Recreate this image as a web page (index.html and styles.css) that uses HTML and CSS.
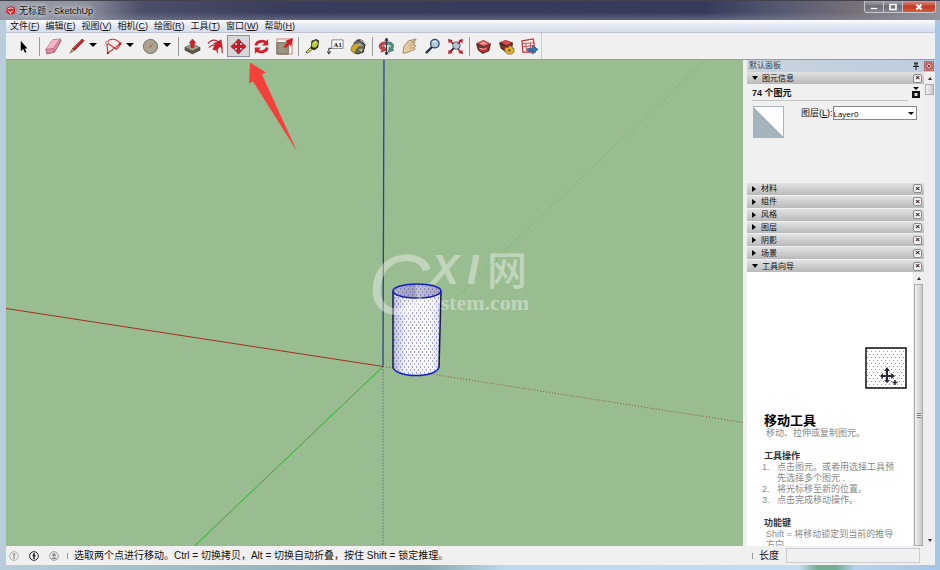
FILE: index.html
```html
<!DOCTYPE html>
<html lang="zh-CN">
<head>
    <meta charset="UTF-8">
    <meta name="viewport" content="width=device-width, initial-scale=1.0">
    <title>无标题 - SketchUp</title>
    <link rel="stylesheet" href="styles.css">
</head>
<body>

    <header class="titlebar">
        <svg class="app-icon" viewBox="0 0 10 10"><path d="M1 2 6 0 10 2V8L5 10 0 7Z" fill="#d8202a"/><path d="M2 3.5 5.5 2 8 3M2 5.5 5 7 8 5.5M5 7V9" stroke="#fff" fill="none"/></svg>
        <h1 class="title">无标题 - SketchUp</h1>
        <div class="window-buttons">
            <button class="win-btn" aria-label="最小化"><svg viewBox="0 0 10 8"><path d="M1.5 4.500h7v2h-7z" fill="#fff" stroke="#555" stroke-width=".5"/></svg></button>
            <button class="win-btn" aria-label="最大化"><svg viewBox="0 0 10 8"><path d="M2 1.500h6v5H2z" fill="none" stroke="#fff" stroke-width="1.600"/></svg></button>
            <button class="win-btn win-close" aria-label="关闭"><svg viewBox="0 0 10 8"><path d="M2.500 1.500 7.500 6.500M7.500 1.500 2.500 6.500" stroke="#fff" stroke-width="2"/></svg></button>
        </div>
    </header>

    <div class="window">
        <nav class="menubar">
            <button>文件(<u>F</u>)</button>
            <button>编辑(<u>E</u>)</button>
            <button>视图(<u>V</u>)</button>
            <button>相机(<u>C</u>)</button>
            <button>绘图(<u>R</u>)</button>
            <button>工具(<u>T</u>)</button>
            <button>窗口(<u>W</u>)</button>
            <button>帮助(<u>H</u>)</button>
        </nav>

        <div class="toolbar">
            <div class="tools">
                <button class="tool" aria-label="选择"><svg viewBox="0 0 18 18"><path d="M4 3v11l2.500-2.300 2 4 1.600-.8-2-3.900H11Z" fill="#000"/></svg></button>
                <span class="sep"></span>
                <button class="tool" aria-label="擦除"><svg viewBox="0 0 18 18"><path d="M8 2 16 1 17 3 10 15 2 17 1 12Z" fill="#e28ba2" stroke="#8d4257" stroke-width=".8"/><path d="M8 2 16 1 9 11 1 12Z" fill="#f3b6c5"/><path d="M1 12 9 11 16 1M9 11l1 4" fill="none" stroke="#a85a70" stroke-width=".7"/></svg></button>
                <button class="tool" aria-label="直线"><svg viewBox="0 0 18 18"><path d="M15 1 17 3 7 13 4 14 5 11Z" fill="#c81e24" stroke="#771418" stroke-width=".7"/><path d="M5 11 7 13 2 16Z" fill="#d7b47b" stroke="#4d3c20" stroke-width=".6"/><path d="M14 2 6 11" stroke="#f06b66" stroke-width=".7"/></svg></button>
                <button class="drop" aria-label="直线选项"></button>
                <button class="tool" aria-label="圆弧"><svg viewBox="0 0 18 18"><path d="M2 5 3 16 16 6M2 5C5-1 13 1 16 6M2 5 12 12C15 9 16 8 16 6" fill="none" stroke="#d42a31" stroke-width="1.200"/><circle cx="2" cy="5" r="1.500" fill="#eee" stroke="#a33" stroke-width=".6"/><circle cx="3" cy="16" r="1.300" fill="#c22"/><circle cx="16" cy="6" r="1.500" fill="#c22"/></svg></button>
                <button class="drop" aria-label="圆弧选项"></button>
                <button class="tool" aria-label="圆"><svg viewBox="0 0 18 18"><circle cx="9" cy="9" r="7.500" fill="#a9a38f" stroke="#746f60"/><circle cx="9" cy="9" r="1" fill="#d13a32"/><path d="m9 9 5-5" stroke="#7f7866" stroke-width=".7"/></svg></button>
                <button class="drop" aria-label="圆选项"></button>
                <span class="sep"></span>
                <button class="tool" aria-label="推/拉"><svg viewBox="0 0 18 18"><path d="M1 10 9 6 17 10 9 14Z" fill="#a19f85" stroke="#484638" stroke-width=".6"/><path d="M1 10v3l8 4 8-4v-3l-8 4Z" fill="#59564a" stroke="#39372f" stroke-width=".5"/><path d="m9 1 3.500 4.500h-2V10h-3V5.500h-2Z" fill="#d9202a" stroke="#84151b" stroke-width=".6"/></svg></button>
                <button class="tool" aria-label="偏移"><svg viewBox="0 0 18 18"><path d="M1 6C6-1 17 2 16 16M2 10c5-5 9-2 9 6" fill="none" stroke="#cc2731" stroke-width="1.300"/><path d="m6 12 3-5-2-1 8-4 1 9-2-2-4 4Z" fill="#d51c27" stroke="#811b20" stroke-width=".6"/></svg></button>
                <button class="tool tool-active" aria-label="移动" aria-pressed="true"><svg viewBox="0 0 18 18"><path d="m9 1 3.500 4H10v3h3V5.500L17 9l-4 3.500V10h-3v3h2.500L9 17l-3.500-4H8v-3H5v2.500L1 9l4-3.500V8h3V5H5.500Z" fill="#d41c28" stroke="#a3151f" stroke-width="1"/></svg></button>
                <button class="tool" aria-label="旋转"><svg viewBox="0 0 18 18"><path d="M3 8C4 3 11 2 14 5M15 10C14 15 7 16 4 13" fill="none" stroke="#d21f2a" stroke-width="3"/><path d="M16 1v7H9.500ZM2 17v-7h6.500Z" fill="#d21f2a"/></svg></button>
                <button class="tool" aria-label="缩放"><svg viewBox="0 0 18 18"><path d="M1 1h16v16H1z" fill="#f4efe9" stroke="#d07a72"/><path d="M1 5h12v12H1z" fill="#9b9681" stroke="#69665a"/><path d="m8 9 4-4-2-2 8-3-2 9-2-2-4 4Z" fill="#da1c28"/></svg></button>
                <span class="sep"></span>
                <button class="tool" aria-label="卷尺"><svg viewBox="0 0 18 18"><path d="m2 15 5-5 2 2-5 4Z" fill="#e5dc36" stroke="#333" stroke-width=".8"/><path d="M8 3 13 1l3 2-1 7-4 3-4-2Z" fill="#292a20"/><ellipse cx="11.500" cy="6.500" rx="3" ry="4" transform="rotate(25 11.500 6.500)" fill="#b9c83d"/><path d="m10 7 3-3" stroke="#eee"/></svg></button>
                <button class="tool" aria-label="文字"><svg viewBox="0 0 18 18"><path d="M5 2h12v9H5z" fill="#fff" stroke="#666" stroke-width=".8"/><path d="M5 11H2v5m-2-2 2 3 2-3" fill="none" stroke="#222"/><text class="icon-text" x="7" y="9">A1</text></svg></button>
                <button class="tool" aria-label="材质"><svg viewBox="0 0 18 18"><path d="M3 8 9 2l7 5-2 8-6 2-6-3Z" fill="#62665b" stroke="#292a25"/><path d="M4 6C6 1 12 0 15 5" fill="none" stroke="#444"/><path d="M1 13C1 7 6 5 9 6l4 3c-4-1-7 2-8 8Z" fill="#d0a830" stroke="#6b551f" stroke-width=".6"/><path d="m10 5 4 3-2 1-4-3Z" fill="#85aeb2"/><path d="m9 12 5-1-2 4Z" fill="#b6b59d"/></svg></button>
                <span class="sep"></span>
                <button class="tool" aria-label="环绕观察"><svg viewBox="0 0 18 18"><path d="M8 4C2 4 0 8 2 11l2 2-1 2 6-2-3-5-1 2C3 8 5 7 8 7Z" fill="#c84347" stroke="#712c2e" stroke-width=".6"/><path d="M10 4c7 0 8 5 5 8l2 1-6 2 1-6 1 2c2-2 1-4-3-4Z" fill="#499a74" stroke="#285e45" stroke-width=".6"/><path d="M9 0v18M7.500 3 9 0l1.500 3M7.500 15 9 18l1.500-3" fill="none" stroke="#334" stroke-width="1.300"/></svg></button>
                <button class="tool" aria-label="平移"><svg viewBox="0 0 18 18"><path d="M2 16 3 9 8 3l8-2-1 2-3 1 3 1-2 2 3 1-2 2 1 2-5 2-5 2Z" fill="#e6c99f" stroke="#8e7350" stroke-width=".8"/><path d="m8 8 4-4M9 9l4-2M9 11l5-1" stroke="#a98b63" stroke-width=".6"/></svg></button>
                <button class="tool" aria-label="缩放视图"><svg viewBox="0 0 18 18"><path d="m9 9-7 7" stroke="#29313d" stroke-width="2.500"/><circle cx="11.500" cy="6" r="4.500" fill="#aacbdc" stroke="#344b67" stroke-width="1.400"/><path d="M9 5q2-2 4-1" fill="none" stroke="#fff"/></svg></button>
                <button class="tool" aria-label="充满视窗"><svg viewBox="0 0 18 18"><path d="m8 10-5 5" stroke="#222" stroke-width="2"/><circle cx="10" cy="8" r="4" fill="#abcbd7" stroke="#3f596d"/><path d="m1 1 5 1-1 1 2 3-1 1-3-3-1 2ZM17 1l-5 1 1 1-2 3 1 1 3-3 1 2ZM17 17l-5-1 1-1-2-3 1-1 3 3 1-2ZM1 17l5-1-1-1 1-2-1-1-2 2-1-2Z" fill="#c91c2c"/></svg></button>
                <span class="sep"></span>
                <button class="tool" aria-label="3D Warehouse"><svg viewBox="0 0 18 18"><path d="m1 6 8-4 8 4-2 8-7 3-5-4Z" fill="#593834"/><path d="m2 5 7-3 7 4-7 3Z" fill="#dc5454"/><path d="m3 9 5 2 7-3-2 6-6 1-3-3Z" fill="#cb292e"/><path d="m5 6 4-2 4 2-4 1Z" fill="#f6a4a1"/><path d="m5 11 4 1 3-1" fill="none" stroke="#f5c0b8"/></svg></button>
                <button class="tool" aria-label="扩展程序库"><svg viewBox="0 0 18 18"><path d="m1 5 7-3 8 3-1 6-7 4-5-4Z" fill="#54302b"/><path d="m3 4 5-2 6 3-5 3Z" fill="#e3484b"/><path d="m3 8 5 2 5-3-1 5-4 1Z" fill="#c7232b"/><path d="M8 10h3l1-2 3 1v2h2v4l-2 2h-5l-3-4Z" fill="#e3b52c" stroke="#7c5b13" stroke-width=".7"/><circle cx="12" cy="13" r="1.300" fill="#6f5525"/></svg></button>
                <button class="tool" aria-label="发送到 LayOut"><svg viewBox="0 0 18 18"><path d="m1 3 12-2 2 14H2Z" fill="#fff1ef" stroke="#cf2e35" stroke-width="1.300"/><path d="m1 6 13-1M2 9l12-1M5 6l1 8M10 5v9" stroke="#d9484c"/><path d="M7 11h5V8l6 4-6 5v-3H7Z" fill="#2d79b8" stroke="#174b81" stroke-width=".7"/></svg></button>
            </div>
        </div>

        <main class="workspace">
            <svg class="canvas" viewBox="6 60 737 487" preserveAspectRatio="xMidYMid slice" role="img" aria-label="模型视图">
                <defs>
                    <pattern id="dots" width="4" height="6" patternUnits="userSpaceOnUse">
                        <path d="M0 1h1v1H0zM2 4h1v1H2z" fill="#4a4dbe"/>
                    </pattern>
                    <linearGradient id="side">
                        <stop offset="0" stop-color="#bdbdcc"/>
                        <stop offset=".25" stop-color="#f3f3fa"/>
                        <stop offset=".75" stop-color="#ffffff"/>
                        <stop offset="1" stop-color="#dadae8"/>
                    </linearGradient>
                    <linearGradient id="inside">
                        <stop offset="0" stop-color="#b2b2c2"/>
                        <stop offset=".45" stop-color="#a0a1b5"/>
                        <stop offset=".5" stop-color="#c4c4d0"/>
                        <stop offset="1" stop-color="#a5a5b9"/>
                    </linearGradient>
                </defs>
                <rect x="6" y="60" width="737" height="487" fill="#9abc91"/>
                <!-- axes -->
                <path d="M6 309 383 367" stroke="#a3301f"/>
                <path d="M383 367 194 547" stroke="#2eac2e"/>
                <path d="M384 60 383 367" stroke="#2b3f9c" stroke-width="1.300"/>
                <path d="M383 367 743 423" stroke="#92502e" stroke-dasharray="1 2"/>
                <path d="M383 367 706 60" stroke="#5ba555" stroke-dasharray="1 3"/>
                <path d="M383 367V547" stroke="#35508c" stroke-dasharray="1 2"/>
                <!-- cylinder -->
                <path d="M393 291V368C395 379 437 379 439 368L441 291Z" fill="url(#side)"/>
                <path d="M393 291V368C395 379 437 379 439 368L441 291Z" fill="url(#dots)"/>
                <path d="M393 292V368M441 292 439 368" stroke="#171742" stroke-width="1.500"/>
                <path d="M393 367C394 379 438 379 439 367" fill="none" stroke="#191ec4" stroke-width="1.600"/>
                <ellipse cx="417" cy="291.500" rx="24" ry="7" fill="url(#inside)"/>
                <ellipse cx="417" cy="291.500" rx="24" ry="7" fill="url(#dots)" stroke="#191ec4" stroke-width="1.600"/>
                <!-- watermark -->
                <g class="watermark">
                    <text class="mark-c" x="368" y="314">C</text>
                    <text class="mark-x" x="431" y="284">X</text>
                    <text class="mark-x" x="467" y="284">I</text>
                    <text class="mark-net" x="487" y="285">网</text>
                    <text class="mark-url" x="421" y="310">system.com</text>
                </g>
                <path d="m250 63 16 10-4 2 35 77-44-70-4 2Z" fill="#f5413c"/>
            </svg>

            <aside class="tray">
                <div class="tray-title">
                    <h2>默认面板</h2>
                    <button class="pin" aria-label="固定"><svg viewBox="0 0 8 8"><path d="M2 1h4M3 1v3M5 1v3M1 4.500h6M4 5v3" stroke="#111" fill="none"/></svg></button>
                    <button class="tray-close" aria-label="关闭面板"><svg viewBox="0 0 8 8"><path d="M1 1h6v6H1zM2.500 2.500l3 3m0-3-3 3" stroke="#8e2c2c" fill="none"/></svg></button>
                </div>
                <div class="tray-body">
                    <div class="panels">
                        <section class="entity">
                            <div class="panel-head"><button class="fold open">图元信息</button><button class="x-btn" aria-label="关闭图元信息">×</button></div>
                            <div class="entity-count">
                                <h3>74 个图元</h3>
                                <button class="lock" aria-label="详细信息"><svg viewBox="0 0 8 11"><path d="M1 0h6L4 3ZM0 4h8v7H0z" fill="#111"/><path d="M2.500 6h3v3h-3z" fill="#ddd"/></svg></button>
                            </div>
                            <div class="entity-info">
                                <button class="swatch" aria-label="材质"></button>
                                <label for="layer">图层(<u>L</u>):</label>
                                <div class="select-box">
                                    <select id="layer"><option>Layer0</option></select>
                                </div>
                            </div>
                        </section>
                        <div class="panel-list">
                            <div class="panel-head"><button class="fold">材料</button><button class="x-btn" aria-label="关闭材料">×</button></div>
                            <div class="panel-head"><button class="fold">组件</button><button class="x-btn" aria-label="关闭组件">×</button></div>
                            <div class="panel-head"><button class="fold">风格</button><button class="x-btn" aria-label="关闭风格">×</button></div>
                            <div class="panel-head"><button class="fold">图层</button><button class="x-btn" aria-label="关闭图层">×</button></div>
                            <div class="panel-head"><button class="fold">阴影</button><button class="x-btn" aria-label="关闭阴影">×</button></div>
                            <div class="panel-head"><button class="fold">场景</button><button class="x-btn" aria-label="关闭场景">×</button></div>
                            <div class="panel-head"><button class="fold open">工具向导</button><button class="x-btn" aria-label="关闭工具向导">×</button></div>
                        </div>
                        <section class="guide">
                            <div class="guide-text">
                                <svg class="guide-pic" viewBox="0 0 42 42">
                                    <defs><pattern id="fine" width="4" height="6" patternUnits="userSpaceOnUse"><path d="M0 1h1v1H0zM2 4h1v1H2z" fill="#999"/></pattern></defs>
                                    <rect x="1" y="1" width="40" height="40" fill="#fff"/>
                                    <rect x="1" y="1" width="40" height="40" fill="url(#fine)" stroke="#111" stroke-width="1.500"/>
                                    <path d="m22 20 3 4h-2v4h3v-2l4 3-4 3v-2h-3v3h2l-3 3-3-3h2v-3h-3v2l-3-3 3-3v2h3v-4h-2Z" fill="#29293f"/>
                                    <path d="M30 33v5M27.500 35.500h5" stroke="#29293f" stroke-width="1.500"/>
                                </svg>
                                <h3>移动工具</h3>
                                <p class="lead">移动、拉伸或复制图元。</p>
                                <h4>工具操作</h4>
                                <ol>
                                    <li>点击图元。或者用选择工具预先选择多个图元 .</li>
                                    <li>将光标移至新的位置。</li>
                                    <li>点击完成移动操作。</li>
                                </ol>
                                <h4>功能键</h4>
                                <p class="keys">Shift = 将移动锁定到当前的推导方向</p>
                            </div>
                            <div class="scroll"><span class="arrow-up"></span><span class="thumb thumb-long"></span></div>
                        </section>
                    </div>
                    <div class="scroll scroll-outer"><span class="arrow-up"></span><span class="thumb thumb-short"></span><span class="arrow-down"></span></div>
                </div>
            </aside>
        </main>

        <footer class="status">
            <button class="status-icon" aria-label="地理位置"><svg viewBox="0 0 10 10"><circle cx="5" cy="5" r="4.300" fill="none" stroke="#aaa"/><path d="M5 4v4M3.500 3h3" stroke="#999" stroke-width="1.500"/></svg></button>
            <button class="status-icon" aria-label="归属"><svg viewBox="0 0 10 10"><circle cx="5" cy="5" r="4.300" fill="#fff" stroke="#222"/><path d="M5 2v6M3.500 4.500h3" stroke="#222" stroke-width="1.500"/></svg></button>
            <button class="status-icon" aria-label="登录"><svg viewBox="0 0 10 10"><circle cx="5" cy="5" r="4.300" fill="#eee" stroke="#999"/><circle cx="5" cy="4" r="1.800" fill="#888"/><path d="M2 8q3-3.500 6 0Z" fill="#888"/></svg></button>
            <span class="status-sep"></span>
            <p class="hint">选取两个点进行移动。Ctrl = 切换拷贝，Alt = 切换自动折叠，按住 Shift = 锁定推理。</p>
            <span class="status-sep"></span>
            <label for="length">长度</label>
            <input id="length" type="text">
        </footer>
    </div>

</body>
</html>
```

FILE: styles.css
```css
* {
    box-sizing: border-box;
}

body {
    margin: 0;
    height: 100vh;
    display: flex;
    flex-direction: column;
    overflow: hidden;
    padding: 0 5px 5px 6px;
    background: linear-gradient(90deg, #b9cddd, #a5c2c8 14%, #8aa8ad 45%, #bfd9ef 54%, #c5dcf2 85%, #74ad94 87%, #74ad94 89%, #b5d2ee 91%, #a5c6e4);
    font-family: "Liberation Sans", "Noto Sans CJK SC", sans-serif;
    font-size: 9px;
    color: #111;
}

h1, h2, h3, h4, p, ol {
    margin: 0;
    padding: 0;
}

button {
    margin: 0;
    padding: 0;
    border: 0;
    background: none;
    font: inherit;
    color: inherit;
}

svg {
    display: block;
}

/* title bar */
.titlebar {
    flex: 0 0 20px;
    display: flex;
    align-items: center;
    margin: 0 -5px 0 -6px;
    padding-left: 6px;
    border-top: 1px solid #42434f;
    background:
        radial-gradient(ellipse at 122px 17px, #5480ac 0, transparent 8px),
        radial-gradient(ellipse at 203px 17px, #7e9fb0 0, transparent 8px),
        radial-gradient(ellipse at 468px 17px, #58988f 0, transparent 8px),
        radial-gradient(ellipse at 555px 17px, #7597c2 0, transparent 8px),
        radial-gradient(ellipse at 645px 17px, #7f9cc2 0, transparent 8px),
        radial-gradient(ellipse at 822px 17px, #80a5d3 0, transparent 10px),
        linear-gradient(transparent 60%, rgba(140, 145, 170, .45)),
        linear-gradient(90deg, #9a9ea9, #8e929f 9%, #4c4f68 15%, #3a3c5c 30%, #373a5b 75%, #555970 83%, #777078 91%, #939399);
}

.app-icon {
    width: 9px;
    height: 9px;
    margin-right: 4px;
}

.title {
    font-size: 9px;
    font-weight: normal;
    line-height: 12px;
    text-shadow: 0 0 4px #fff, 0 0 6px #ddd;
}

.window-buttons {
    display: flex;
    align-self: flex-start;
    margin-left: auto;
    margin-right: 4px;
    border: 1px solid #c5c6cd;
    border-top: 0;
    border-radius: 0 0 3px 3px;
    overflow: hidden;
}

.win-btn {
    width: 19px;
    height: 11px;
    display: grid;
    place-items: center;
    border-right: 1px solid #c5c6cd;
    background: linear-gradient(#a5a5ad, #6b6c78 50%, #878893);
}

.win-btn svg {
    width: 10px;
    height: 8px;
}

.win-close {
    width: 32px;
    border-right: 0;
    background: linear-gradient(#dc9487, #bf3c28 50%, #d95b38);
}

/* window content */
.window {
    flex: 1;
    min-height: 0;
    display: flex;
    flex-direction: column;
    background: #f0f0f0;
}

.menubar {
    flex: 0 0 13px;
    display: flex;
    align-items: center;
    gap: 6px;
    padding-left: 4px;
    border-bottom: 1px solid #c0c4ce;
    background: linear-gradient(#fbfcfe, #e4e8f4 50%, #d6dcee);
    line-height: 12px;
}

.menubar button {
    white-space: nowrap;
}

.toolbar {
    flex: 0 0 27px;
    display: flex;
    border-bottom: 1px solid #9a9d9a;
}

.tools {
    display: flex;
    align-items: center;
    padding-left: 8px;
    border-right: 1px solid #ccc;
}

.tool {
    width: 23px;
    height: 22px;
    display: grid;
    place-items: center;
    border: 1px solid transparent;
}

.tool svg {
    width: 17px;
    height: 17px;
}

.tool-active {
    border-color: #8b9198;
    background: #d5d7da;
}

.icon-text {
    font: bold 7px "Liberation Serif", serif;
}

.drop {
    width: 14px;
    height: 20px;
    display: grid;
    place-items: center;
}

.drop::before {
    content: "";
    margin: 0 4px 3px 0;
    border: 4px solid transparent;
    border-top-color: #000;
    border-bottom: 0;
}

.sep {
    width: 1px;
    height: 19px;
    margin: 0 2px;
    background: #999;
}

.workspace {
    flex: 1;
    min-height: 0;
    display: flex;
    gap: 4px;
}

.canvas {
    flex: 1;
    min-width: 0;
    height: 100%;
}

.watermark {
    fill: #fff;
    opacity: .38;
}

.mark-c {
    font: italic 86px "Liberation Sans", sans-serif;
}

.mark-x {
    font: italic bold 42px "Liberation Sans", sans-serif;
}

.mark-net {
    font: 500 40px "Noto Sans CJK SC", sans-serif;
}

.mark-url {
    font: bold 22px "Liberation Serif", serif;
}

/* default tray */
.tray {
    flex: 0 0 188px;
    display: flex;
    flex-direction: column;
    min-height: 0;
}

.tray-title {
    flex: 0 0 12px;
    display: flex;
    align-items: center;
    gap: 4px;
    padding: 0 1px 0 2px;
    background: linear-gradient(90deg, #c8d3dd, #bccddf);
}

.tray-title h2 {
    flex: 1;
    font-size: 8px;
    font-weight: normal;
    line-height: 12px;
    color: #3b4754;
}

.pin svg {
    width: 8px;
    height: 8px;
}

.tray-close {
    border: 1px solid #b96a6a;
    background: #e5b9b5;
}

.tray-close svg {
    width: 8px;
    height: 8px;
}

.tray-body {
    flex: 1;
    min-height: 0;
    display: flex;
}

.panels {
    flex: 1;
    min-width: 0;
    display: flex;
    flex-direction: column;
}

.panel-head {
    display: flex;
    align-items: center;
    height: 12px;
    padding: 0 2px 0 5px;
    background: linear-gradient(#e2e2e2, #b9b9b9);
}

.fold {
    flex: 1;
    display: flex;
    align-items: center;
    gap: 4px;
    font-size: 8px;
    line-height: 11px;
}

.fold::before {
    content: "";
    border: 3px solid transparent;
    border-left: 4px solid #000;
    border-right: 0;
    margin-right: 1px;
}

.fold.open::before {
    border: 3px solid transparent;
    border-top: 4px solid #000;
    border-bottom: 0;
    margin-right: 0;
}

.x-btn {
    width: 9px;
    height: 9px;
    border: 1px solid #888;
    border-radius: 2px;
    background: #f3f3f3;
    font-size: 8px;
    font-weight: bold;
    line-height: 6px;
}

.entity {
    height: 111px;
    flex: none;
}

.entity-count {
    display: flex;
    align-items: center;
    padding: 0 4px 0 5px;
    height: 17px;
}

.entity-count h3 {
    flex: 1;
    height: 17px;
    margin-right: 4px;
    border-bottom: 1px solid #c2c2c2;
    font-size: 9px;
    line-height: 18px;
}

.lock svg {
    width: 8px;
    height: 11px;
}

.entity-info {
    display: flex;
    align-items: flex-start;
    padding: 5px 7px 0 6px;
    line-height: 14px;
}

.swatch {
    width: 31px;
    height: 32px;
    margin-right: 17px;
    border: 1px solid #aab4bb;
    background: linear-gradient(45deg, #a5b3bd 50%, #fff 50%);
}

.select-box {
    flex: 1;
    display: grid;
    align-items: center;
}

.select-box select,
.select-box::after {
    grid-area: 1 / 1;
}

.select-box select {
    appearance: none;
    width: 100%;
    height: 14px;
    padding: 0;
    border: 1px solid #888;
    border-radius: 0;
    background: #fff;
    font: 8px "Open Sans", sans-serif;
}

.select-box::after {
    content: "";
    justify-self: end;
    margin-right: 3px;
    border: 3px solid transparent;
    border-top-color: #000;
    border-bottom: 0;
    pointer-events: none;
}

.panel-list {
    flex: none;
    display: grid;
    grid-auto-rows: 1fr;
    gap: 1px;
    height: 89px;
}

.panel-list .panel-head {
    height: auto;
}

.guide {
    flex: 1;
    min-height: 0;
    display: flex;
    overflow: hidden;
    background: #fff;
}

.guide-text {
    flex: 1;
    min-width: 0;
    padding: 75px 15px 0 15px;
    line-height: 11px;
    color: #888;
}

.guide-pic {
    width: 42px;
    height: 42px;
    margin: 0 -9px 25px auto;
}

.guide h3 {
    font-size: 13px;
    line-height: 14px;
    color: #000;
    margin-left: 2px;
}

.guide h4 {
    margin: 12px 0 0 2px;
    font-size: 9px;
    line-height: 11px;
    color: #333;
}

.lead,
.keys {
    margin-left: 4px;
}

.keys {
    padding-right: 4px;
}

.guide ol {
    padding-left: 15px;
    list-style: none;
    counter-reset: step;
}

.guide li {
    counter-increment: step;
}

.guide li::before {
    content: counter(step) ".";
    float: left;
    margin-left: -15px;
}

.scroll {
    flex: 0 0 11px;
    display: flex;
    flex-direction: column;
    align-items: center;
    background: #eee;
}

.arrow-up,
.arrow-down {
    margin: 5px 0 4px;
    border: 2px solid transparent;
    border-bottom: 3px solid #333;
    border-top: 0;
}

.arrow-down {
    margin: auto 0 4px;
    border-top: 3px solid #333;
    border-bottom: 0;
}

.thumb {
    width: 9px;
    border: 1px solid #aaa;
    background: linear-gradient(90deg, #f2f2f2, #c8c8c8);
}

.thumb-long {
    flex: 1;
    display: grid;
    place-items: center;
}

.thumb-long::before {
    content: "";
    width: 4px;
    height: 5px;
    background: repeating-linear-gradient(#777 0 1px, #eee 1px 2px);
}

.thumb-short {
    height: 11px;
}

/* status bar */
.status {
    flex: 0 0 19px;
    display: flex;
    align-items: center;
    padding: 0 15px 0 3px;
    font-size: 10px;
    line-height: 16px;
}

.status-icon {
    margin-right: 10px;
}

.status-icon svg {
    width: 10px;
    height: 10px;
}

.status-sep {
    width: 1px;
    height: 6px;
    margin: 0 6px 0 -2px;
    background: #999;
}

.hint {
    flex: 1;
    white-space: nowrap;
}

#length {
    width: 134px;
    height: 15px;
    margin-left: 7px;
    border: 1px solid #c8ccd0;
    background: #f0f0f0;
    font: inherit;
}
```
